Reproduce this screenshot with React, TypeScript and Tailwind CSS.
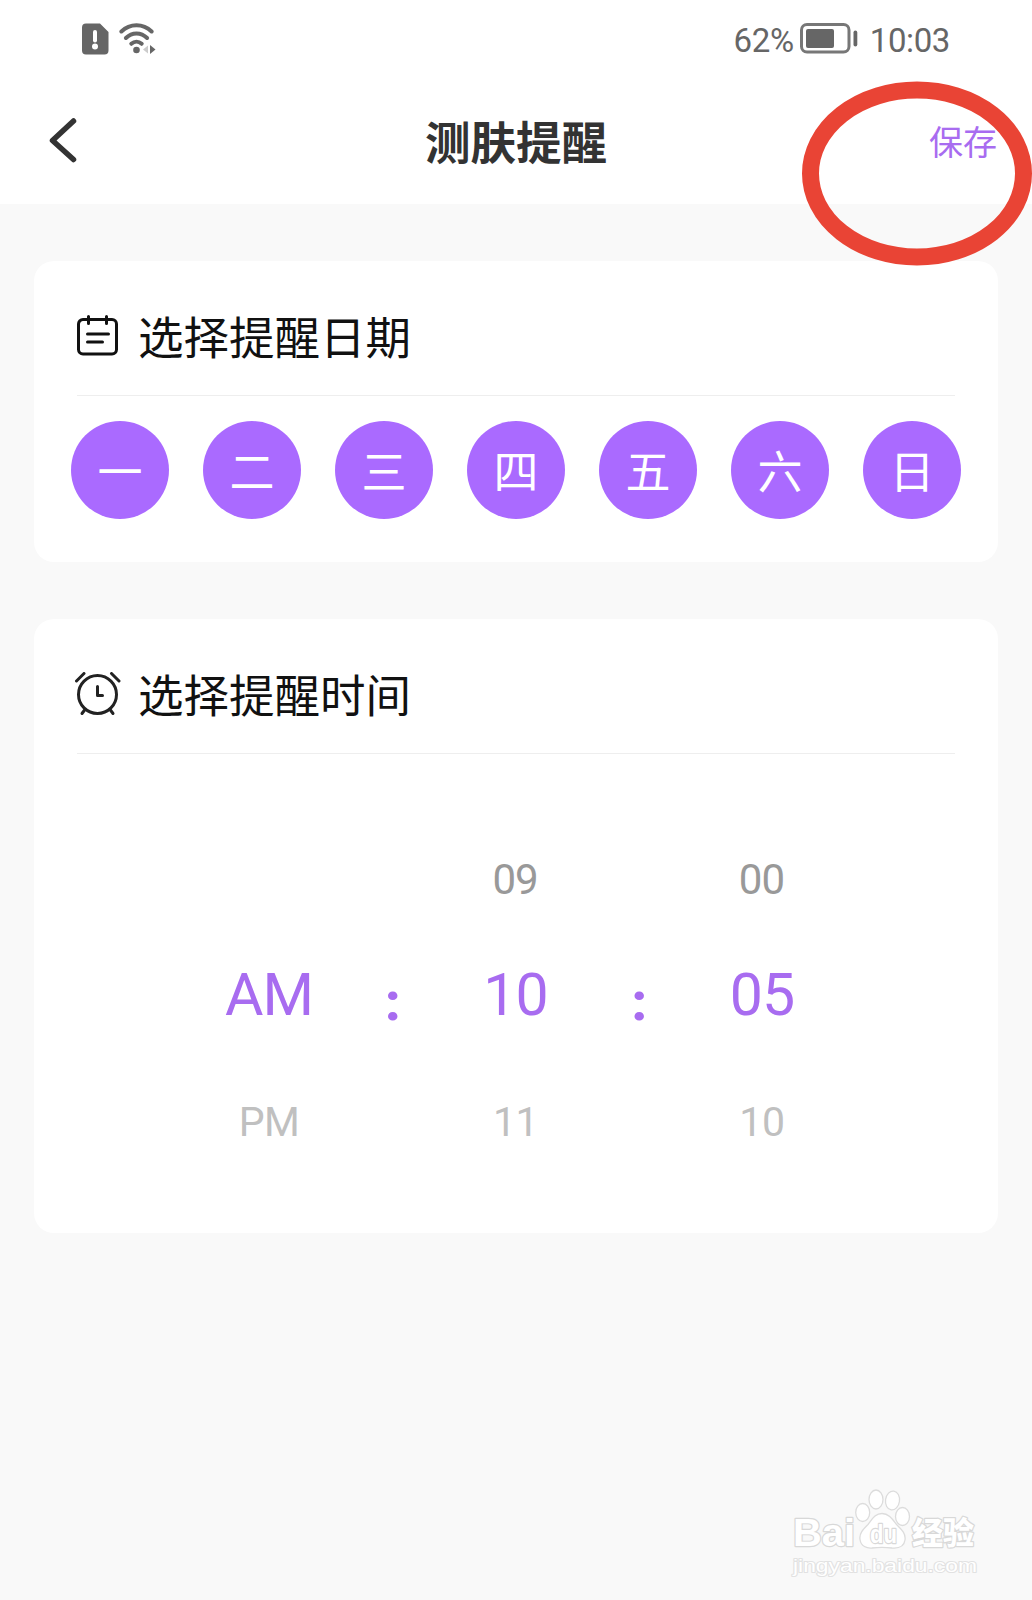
import type { ReactNode } from "react";

const WEEK_DAYS = ["一", "二", "三", "四", "五", "六", "日"];

const TIME_COLUMNS = [
  { prev: "", current: "AM", next: "PM" },
  { prev: "09", current: "10", next: "11" },
  { prev: "00", current: "05", next: "10" },
];

function SimAlertIcon() {
  return (
    <svg width="27" height="32" viewBox="0 0 27 32">
      <path d="M4 0.5H18L26.500 9V27.500a4 4 0 0 1-4 4H4a4 4 0 0 1-4-4V4.500a4 4 0 0 1 4-4z" fill="#666" />
      <path d="M13 9v8.500" stroke="#fff" strokeWidth="4" strokeLinecap="round" />
      <circle cx="13" cy="23.500" r="3" fill="#fff" />
    </svg>
  );
}

function WifiIcon() {
  return (
    <svg width="38" height="32" viewBox="0 0 38 32" fill="none" stroke="#666" strokeWidth="4" strokeLinecap="round">
      <path d="M2.400 8.500C11 0.300 24 0.300 32.600 8.500" />
      <path d="M6.900 15C13 8.900 22 8.900 28.100 15" />
      <path d="M12.300 20.800C15.500 18 19.500 18 22.700 20.800" />
      <circle cx="17.500" cy="27" r="3.300" fill="#666" stroke="none" />
      <path d="M29 22.500v8L24 26.500z" fill="#ccc" stroke="none" />
      <path d="M31 22v9l5.500-4.500z" fill="#666" stroke="none" />
    </svg>
  );
}

function BatteryIcon() {
  return (
    <svg width="58" height="32" viewBox="0 0 58 32">
      <rect x="1.500" y="1.500" width="47.500" height="27.500" rx="5.500" fill="none" stroke="#777" strokeWidth="3" />
      <rect x="6" y="6" width="28" height="19" rx="2" fill="#666" />
      <rect x="53.500" y="7.500" width="3.800" height="16" rx="1.900" fill="#666" />
    </svg>
  );
}

function CalendarIcon() {
  return (
    <svg width="41" height="42" viewBox="0 0 41 42" fill="none" stroke="#111" strokeWidth="3" strokeLinecap="round">
      <rect x="1.500" y="4.500" width="38" height="34.500" rx="4.500" />
      <path d="M11.500 1.500v7M29.500 1.500v7" />
      <path d="M10.500 19h21M10.500 27h15" />
    </svg>
  );
}

function AlarmIcon() {
  return (
    <svg width="46" height="44" viewBox="0 0 46 44" fill="none" stroke="#222" strokeWidth="3" strokeLinecap="round" strokeLinejoin="round">
      <circle cx="22.500" cy="22.500" r="19" />
      <path d="M1.500 9L9 1.500M36.500 1.500L44 9" />
      <path d="M10 37.500l-3 4M35 37.500l3 4" />
      <path d="M22.500 14.500v9h5" />
    </svg>
  );
}

function Card({ icon, title, className, children }: { icon: ReactNode; title: string; className: string; children: ReactNode }) {
  return (
    <section className={`mx-[34px] rounded-[20px] bg-white ${className}`}>
      <div className="mx-[43px] flex h-[135px] items-center border-b border-[#eee] pt-4">
        <div className="flex w-[61px] shrink-0">{icon}</div>
        <h2 className="whitespace-nowrap pt-[7px] text-[45.500px] leading-none text-[#111]">{title}</h2>
      </div>
      {children}
    </section>
  );
}

function Colon() {
  return <div className="row-span-3 flex items-center justify-center pb-1 text-[52px] font-black text-[#a86cf0]">:</div>;
}

function TimeColumn({ prev, current, next }: { prev: string; current: string; next: string }) {
  return (
    <div className="grid grid-rows-[116px_116px_138px] place-items-center leading-none">
      <span className="-ml-[2px] pt-[3px] text-[42px] tracking-[-1px] text-[#999]">{prev}</span>
      <span className="-ml-px text-[59px] tracking-[-1px] text-[#a86cf0]">{current}</span>
      <span className="-ml-px pt-[2px] text-[41px] tracking-[-0.500px] text-[#c0c0c0]">{next}</span>
    </div>
  );
}

function Watermark() {
  return (
    <svg className="absolute bottom-0 right-0" width="262" height="150" viewBox="770 1450 262 150">
      <g fill="#fff" stroke="#dcdcdc" strokeWidth="1.300" strokeLinejoin="round">
        <ellipse cx="862.700" cy="1512.500" rx="7" ry="9" />
        <ellipse cx="876" cy="1499.500" rx="7" ry="9.500" />
        <ellipse cx="892.500" cy="1500.500" rx="7" ry="9.500" transform="rotate(8 892.500 1500.500)" />
        <ellipse cx="902.500" cy="1516.500" rx="7" ry="9" />
        <path d="M882 1513.500c-7 0-10 6-14 11-5 5-9 9-8 15 1 7 7 9 12 8.500 7-1 13-1 20 0 6 .5 12-1 13-8 1-7-4-11-8-15-4-5-8-11.500-15-11.500z" />
      </g>
      <g fill="#fff" stroke="#d8d8d8" strokeWidth="2.400" strokeLinejoin="round" className="font-['Liberation_Sans','Noto_Sans_CJK_SC',sans-serif] [paint-order:stroke]">
        <text x="793" y="1546" fontSize="39" fontWeight="700" textLength="62" lengthAdjust="spacingAndGlyphs">Bai</text>
        <text x="870" y="1543" fontSize="26" fontWeight="700" textLength="27" lengthAdjust="spacingAndGlyphs">du</text>
        <text x="912" y="1544" fontSize="31" fontWeight="900" textLength="62" lengthAdjust="spacingAndGlyphs">经验</text>
        <text x="793" y="1571.500" fontSize="19" strokeWidth="2" stroke="#e2e2e2" textLength="184" lengthAdjust="spacingAndGlyphs">jingyan.baidu.com</text>
      </g>
    </svg>
  );
}

export default function App() {
  return (
    <div className="relative h-[1600px] w-[1032px] overflow-hidden bg-[#f9f9f9] font-[Roboto,'Noto_Sans_CJK_SC',sans-serif]">
      <header className="h-[204px] bg-white">
        <div className="flex h-[78px] items-center justify-between pl-[82px] pr-[82px] text-[33px] leading-none text-[#666]">
          <div className="flex items-center gap-[10px]">
            <SimAlertIcon />
            <WifiIcon />
          </div>
          <div className="flex items-center">
            <span className="mr-[6px] pt-[2px] tracking-[-0.300px]">62%</span>
            <BatteryIcon />
            <span className="ml-3 pt-[2px] tracking-[-0.400px]">10:03</span>
          </div>
        </div>
        <div className="grid h-[126px] grid-cols-[1fr_auto_1fr] items-start px-[34px] pt-[38px]">
          <svg className="ml-[14px]" width="32" height="48" viewBox="0 0 32 48" fill="none" stroke="#333" strokeWidth="5.500" strokeLinecap="round" strokeLinejoin="round">
            <path d="M25.500 5L4.500 24.500L25.500 43.500" />
          </svg>
          <h1 className="pt-[5px] text-[45.500px] font-bold leading-[48px] text-[#333]">测肤提醒</h1>
          <button className="justify-self-end pr-px pt-[3px] text-[34px] leading-[48px] text-[#a86cf0]">保存</button>
        </div>
      </header>

      <main className="flex flex-col gap-[57px] pt-[57px]">
        <Card icon={<CalendarIcon />} title="选择提醒日期" className="h-[301px]">
          <div className="flex justify-between px-[37px] pt-[25px]">
            {WEEK_DAYS.map((day) => (
              <div key={day} className="flex size-[98px] items-center justify-center rounded-full bg-[#aa6aff] pt-[7px] text-[45px] leading-none text-white">
                {day}
              </div>
            ))}
          </div>
        </Card>

        <Card icon={<span className="-ml-[2px]"><AlarmIcon /></span>} title="选择提醒时间" className="h-[614px]">
          <div className="mx-auto grid w-[616px] grid-cols-5 pt-[66px]">
            <TimeColumn {...TIME_COLUMNS[0]} />
            <Colon />
            <TimeColumn {...TIME_COLUMNS[1]} />
            <Colon />
            <TimeColumn {...TIME_COLUMNS[2]} />
          </div>
        </Card>
      </main>

      <svg className="absolute right-0 top-[80px]" width="232" height="188" viewBox="0 0 232 188">
        <ellipse cx="117" cy="93.500" rx="106.500" ry="83.500" fill="none" stroke="#e94435" strokeWidth="17" />
      </svg>
      <Watermark />
    </div>
  );
}
